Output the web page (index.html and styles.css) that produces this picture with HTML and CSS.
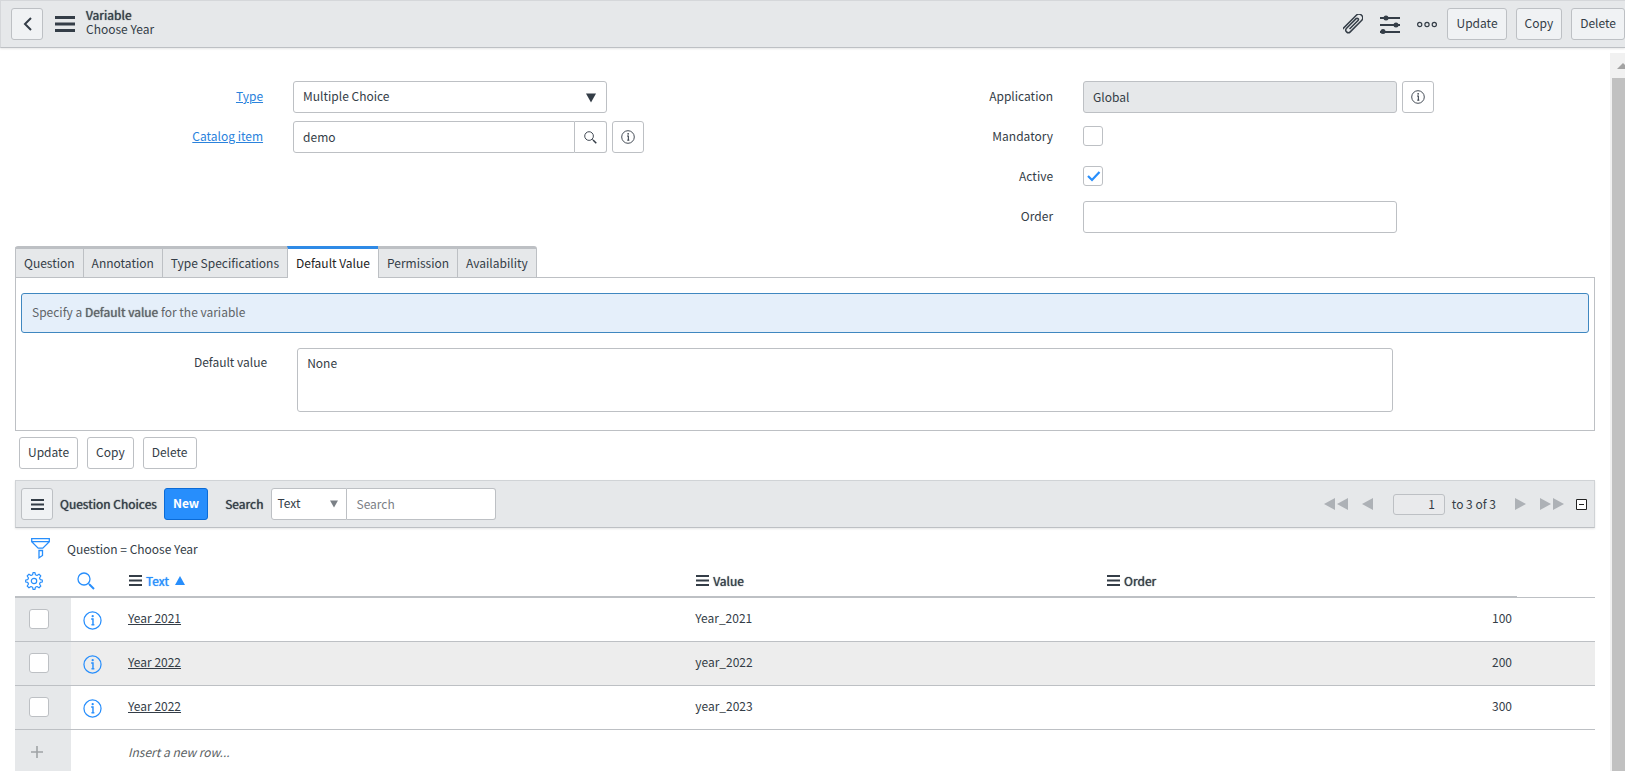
FILE: index.html
```html
<!DOCTYPE html>
<html lang="en">
<head>
<meta charset="utf-8">
<title>Choose Year | Variable</title>
<link rel="stylesheet" href="styles.css">
</head>
<body>
<svg class="defs" aria-hidden="true">
  <symbol id="burger" viewBox="0 0 20 16"><path d="M0 1.5h20M0 8h20M0 14.5h20" stroke="currentColor" stroke-width="3"/></symbol>
  <symbol id="burger-small" viewBox="0 0 13 11"><path d="M0 1h13M0 5.5h13M0 10h13" stroke="currentColor" stroke-width="2"/></symbol>
  <symbol id="info" viewBox="0 0 20 20"><g fill="none" stroke="currentColor" stroke-width="1.3"><circle cx="10" cy="10" r="9"/><path d="M8.6 8.5h1.900v6.500" stroke-width="1.5"/><path d="M8.8 14.5h3.200"/></g><circle cx="10.2" cy="5.5" r="1.2" fill="currentColor"/></symbol>
  <symbol id="glass" viewBox="0 0 18 18"><g fill="none" stroke="currentColor" stroke-width="1.3"><circle cx="7" cy="7" r="6"/><path d="M11.5 11.5l1.5 1.5"/><path d="M12.5 12.5l4.5 4.5" stroke-width="2"/></g></symbol>
  <symbol id="left" viewBox="0 0 11 12"><path d="M11 0v12L0 6z" fill="currentColor"/></symbol>
  <symbol id="right" viewBox="0 0 11 12"><path d="M0 0v12L11 6z" fill="currentColor"/></symbol>
  <symbol id="down" viewBox="0 0 10 10"><path d="M0 0.5h10L5 9.5z" fill="currentColor"/></symbol>
</svg>

<header class="topbar">
  <button class="btn square shaded" aria-label="Back"><svg class="chevron" viewBox="0 0 10 14"><path d="M9 1L3 7l6 6" fill="none" stroke="currentColor" stroke-width="2"/></svg></button>
  <button class="plain" aria-label="Menu"><svg class="burger-lg"><use href="#burger"/></svg></button>
  <h1 class="title"><span class="strong">Variable</span><span>Choose Year</span></h1>
  <div class="tools">
    <button class="plain" aria-label="Attachments"><svg class="tool-icon" viewBox="0 0 20 20"><path transform="rotate(45 10 10)" d="M6.2 21.5V1.5a3.700 3.700 0 0 1 7.400 0V17.5a2.600 2.600 0 0 1-5.200 0V4a1.300 1.300 0 0 1 2.700 0V16" fill="none" stroke="currentColor" stroke-width="1.5"/></svg></button>
    <button class="plain" aria-label="Personalize form"><svg class="tool-icon" viewBox="0 0 20 20"><path d="M0 4h20M0 11h20M0 18h20" stroke="currentColor" stroke-width="1.8"/><g fill="currentColor"><circle cx="6" cy="4" r="2.5"/><circle cx="16" cy="11" r="2.5"/><circle cx="3" cy="17.5" r="2.5"/></g></svg></button>
    <button class="plain" aria-label="More options"><svg class="tool-icon" viewBox="0 0 20 20"><g fill="none" stroke="currentColor" stroke-width="1.2"><circle cx="2.700" cy="10.5" r="2.100"/><circle cx="10" cy="10.5" r="2.100"/><circle cx="17.300" cy="10.5" r="2.100"/></g></svg></button>
  </div>
  <div class="actions">
    <button class="btn shaded">Update</button>
    <button class="btn shaded">Copy</button>
    <button class="btn shaded">Delete</button>
  </div>
</header>

<div class="body">
  <main class="content">
    <form class="form">
      <div class="column">
        <div class="field">
          <label for="type"><a href="#type">Type</a></label>
          <div class="select"><select id="type"><option>Multiple Choice</option></select><svg class="caret"><use href="#down"/></svg></div>
        </div>
        <div class="field">
          <label for="item"><a href="#item">Catalog item</a></label>
          <div class="group"><input class="input" id="item" type="text" value="demo"><button type="button" class="btn square" aria-label="Look up"><svg class="glass-sm"><use href="#glass"/></svg></button></div>
          <button type="button" class="btn square" aria-label="Preview"><svg class="info-sm"><use href="#info"/></svg></button>
        </div>
      </div>
      <div class="column">
        <div class="field">
          <label for="app">Application</label>
          <input class="input readonly" id="app" type="text" value="Global" readonly>
          <button type="button" class="btn square" aria-label="Preview"><svg class="info-sm"><use href="#info"/></svg></button>
        </div>
        <div class="field"><label for="mandatory">Mandatory</label><input class="check" id="mandatory" type="checkbox"></div>
        <div class="field"><label for="active">Active</label><span class="tick"><input class="check" id="active" type="checkbox" checked><svg viewBox="0 0 20 20"><path d="M5 10l4 4 7.5-8" fill="none" stroke="currentColor" stroke-width="2.2"/></svg></span></div>
        <div class="field"><label for="order">Order</label><input class="input" id="order" type="text"></div>
      </div>
    </form>

    <div class="tabs" role="tablist">
      <button class="tab" role="tab">Question</button>
      <button class="tab" role="tab">Annotation</button>
      <button class="tab" role="tab">Type Specifications</button>
      <button class="tab selected" role="tab" aria-selected="true">Default Value</button>
      <button class="tab" role="tab">Permission</button>
      <button class="tab" role="tab">Availability</button>
    </div>
    <section class="panel">
      <p class="message">Specify a <span class="strong">Default value</span> for the variable</p>
      <div class="field-wide">
        <label for="default">Default value</label>
        <textarea id="default">None</textarea>
      </div>
    </section>

    <div class="actions below">
      <button class="btn">Update</button>
      <button class="btn">Copy</button>
      <button class="btn">Delete</button>
    </div>

    <section>
      <div class="listbar">
        <button class="btn square shaded" aria-label="List menu"><svg class="burger-sm"><use href="#burger-small"/></svg></button>
        <h2 class="list-title strong">Question Choices</h2>
        <button class="btn primary">New</button>
        <label class="search-label strong" for="search">Search</label>
        <div class="group search">
          <div class="select"><select aria-label="Search column"><option>Text</option></select><svg class="caret"><use href="#down"/></svg></div>
          <input class="input" id="search" type="text" placeholder="Search">
        </div>
        <nav class="pager">
          <button class="plain pair" aria-label="First page"><svg><use href="#left"/></svg><svg><use href="#left"/></svg></button>
          <button class="plain" aria-label="Previous page"><svg><use href="#left"/></svg></button>
          <span class="range"><input type="text" value="1" aria-label="Row number"><span>to 3 of 3</span></span>
          <button class="plain" aria-label="Next page"><svg><use href="#right"/></svg></button>
          <button class="plain pair" aria-label="Last page"><svg><use href="#right"/></svg><svg><use href="#right"/></svg></button>
          <button class="plain collapse" aria-label="Collapse list"><svg viewBox="0 0 11 11"><path d="M.5.5h10v10H.5zM3 5.5h5" fill="none" stroke="currentColor"/></svg></button>
        </nav>
      </div>
      <div class="filter">
        <button class="plain blue" aria-label="Filter"><svg class="funnel" viewBox="0 0 19 21"><g fill="none" stroke="currentColor" stroke-width="1.3"><path d="M.7.7h17.600v3l-6.500 6.500H7.200L.7 3.700zM.7 3.700h17.600"/><path d="M8 12.500h3.500v5L8 19.800z"/></g></svg></button>
        <span>Question = Choose Year</span>
      </div>
      <table class="list">
        <colgroup><col class="c-check"><col class="c-info"><col class="c-text"><col class="c-value"><col class="c-order"><col class="c-end"></colgroup>
        <thead>
          <tr>
            <th class="gear"><button class="plain blue" aria-label="Personalize list"><svg class="head-icon" viewBox="0 0 18 18"><g fill="none" stroke="currentColor" stroke-width="1.2" stroke-linejoin="round"><path d="M7.600 2.800L8 .7h2l.4 2.100 1.600.7 2-1.300 1.800 1.800-1.300 2 .7 1.600 2.100.4v2l-2.100.4-.7 1.600 1.300 2-1.800 1.800-2-1.300-1.600.7-.4 2.100H8l-.4-2.100-1.600-.7-2 1.300L2.200 14l1.300-2-.7-1.600L.7 10V8l2.100-.4L3.500 6l-1.300-2L4 2.200l2 1.300z"/><circle cx="9" cy="9" r="2.700"/></g></svg></button></th>
            <th class="find"><button class="plain blue" aria-label="Search in list"><svg class="head-icon"><use href="#glass"/></svg></button></th>
            <th><span class="head"><svg class="burger-sm"><use href="#burger-small"/></svg><a class="sorted strong" href="#text">Text</a><svg class="sort" viewBox="0 0 10 9"><path d="M5 0l5 9H0z" fill="currentColor"/></svg></span></th>
            <th><span class="head"><svg class="burger-sm"><use href="#burger-small"/></svg><span class="strong">Value</span></span></th>
            <th><span class="head"><svg class="burger-sm"><use href="#burger-small"/></svg><span class="strong">Order</span></span></th>
            <th class="last"></th>
          </tr>
        </thead>
        <tbody>
          <tr><td class="pick"><input class="check" type="checkbox" aria-label="Select Year 2021"></td><td class="more"><button class="plain blue" aria-label="Preview record"><svg class="info-lg"><use href="#info"/></svg></button></td><td><a href="#r1">Year 2021</a></td><td>Year_2021</td><td class="num">100</td><td></td></tr>
          <tr><td class="pick"><input class="check" type="checkbox" aria-label="Select Year 2022"></td><td class="more"><button class="plain blue" aria-label="Preview record"><svg class="info-lg"><use href="#info"/></svg></button></td><td><a href="#r2">Year 2022</a></td><td>year_2022</td><td class="num">200</td><td></td></tr>
          <tr><td class="pick"><input class="check" type="checkbox" aria-label="Select Year 2022"></td><td class="more"><button class="plain blue" aria-label="Preview record"><svg class="info-lg"><use href="#info"/></svg></button></td><td><a href="#r3">Year 2022</a></td><td>year_2023</td><td class="num">300</td><td></td></tr>
          <tr class="insert"><td class="pick"><button class="plain" aria-label="Insert row"><svg class="plus" viewBox="0 0 12 12"><path d="M6 0v12M0 6h12" stroke="currentColor" stroke-width="1.6"/></svg></button></td><td></td><td colspan="4">Insert a new row...</td></tr>
        </tbody>
      </table>
    </section>
  </main>
  <div class="scrollbar" aria-hidden="true"><svg viewBox="0 0 17 25"><path d="M7 16h12l-6-6z" fill="#a3a3a3"/></svg><div class="thumb"></div></div>
</div>
</body>
</html>
```
FILE: styles.css
```css
:root {
  --ink: #343d47;
  --line: #bdc0c4;
  --bar: #e6e8ea;
  --blue: #278efc;
}
* { box-sizing: border-box; }
body {
  margin: 0;
  height: 100vh;
  display: flex;
  flex-direction: column;
  overflow: hidden;
  background: #fff;
  color: var(--ink);
  font: 12px/18px "Noto Sans CJK SC", "Noto Sans", sans-serif;
}
button, input, select, textarea { font: inherit; color: inherit; margin: 0; }
svg { display: block; flex: none; }
.defs { display: none; }
.strong { font-weight: 400; text-shadow: 0 0 1px currentColor; }
.plain { border: 0; padding: 0; background: none; display: flex; }
.blue { color: var(--blue); }

.btn {
  height: 32px;
  padding: 0 8px 2px;
  border: 1px solid var(--line);
  border-radius: 3px;
  background: #fff;
  display: flex;
  align-items: center;
  justify-content: center;
  flex: none;
}
.shaded { background: #f0f2f4; }
.square { width: 32px; padding: 0; }
.primary { background: var(--blue); border-color: #0b6bd6; color: #fff; font-weight: 700; }

.topbar {
  display: flex;
  align-items: center;
  flex: none;
  height: 48px;
  padding-left: 10px;
  border: 1px solid #d5d7da;
  border-right: 0;
  border-bottom-color: var(--line);
  background: var(--bar);
  box-shadow: 0 1px 2px rgba(0, 0, 0, .1);
}
.chevron { width: 10px; height: 14px; }
.burger-lg { width: 20px; height: 16px; margin: 0 11px 0 12px; }
.title { margin: 0; padding-bottom: 5px; font-size: 12px; font-weight: 400; line-height: 14px; display: flex; flex-direction: column; }
.tools { display: flex; gap: 17px; margin-left: auto; }
.tool-icon { width: 20px; height: 20px; }
.actions { display: flex; gap: 9px; }
.topbar .actions { margin-left: 10px; }

.body { flex: 1; min-height: 0; display: flex; }
.content { flex: 1; min-width: 0; padding: 33px 15px 0; }

.form { display: grid; grid-template-columns: 1fr 1fr; }
.column { display: flex; flex-direction: column; gap: 8px; }
.field { display: flex; align-items: center; min-height: 32px; gap: 5px; }
.field > label { width: 31.4%; margin-right: 25px; padding-bottom: 2px; text-align: right; }
.form a { color: #2a82dc; text-decoration: underline; }
.field > .select, .field > .group, .field > .input { flex: none; width: 39.8%; }
.input, .select select, textarea {
  border: 1px solid var(--line);
  border-radius: 3px;
  background: #fff;
  padding: 0 9px;
}
.input { height: 32px; min-width: 0; padding-bottom: 2px; }
.input.readonly { background: var(--bar); }
.group { display: flex; }
.group > .input { flex: 1; border-radius: 3px 0 0 3px; }
.group > .btn { border-left: 0; border-radius: 0 3px 3px 0; }
.select { position: relative; }
.select select { appearance: none; width: 100%; height: 32px; padding-bottom: 2px; }
.caret { position: absolute; right: 11px; top: 12px; width: 10px; height: 10px; pointer-events: none; }
.glass-sm { width: 13px; height: 13px; }
.info-sm { width: 14px; height: 14px; }
.check {
  appearance: none;
  display: block;
  width: 20px;
  height: 20px;
  border: 1px solid var(--line);
  border-radius: 3px;
  background: #fff;
}
.field .check { margin-bottom: 2px; }
.tick { position: relative; color: var(--blue); }
.tick svg { position: absolute; top: 0; left: 0; width: 20px; height: 20px; pointer-events: none; }

.tabs { display: flex; margin-top: 13px; }
.tab {
  height: 31px;
  padding: 0 8px;
  border: 1px solid var(--line);
  border-width: 3px 0 0 1px;
  background: var(--bar);
}
.tab:first-child { border-top-left-radius: 3px; }
.tab:last-child { border-right-width: 1px; border-top-right-radius: 3px; }
.tab.selected { height: 32px; margin-bottom: -1px; padding-bottom: 1px; background: #fff; border-top-color: #2f8ae6; color: #222; z-index: 1; }
.panel { border: 1px solid var(--line); padding: 15px 5px 18px; }
.message {
  margin: 0 0 15px;
  padding: 9px 10px 11px;
  border: 1px solid #3f87c0;
  border-radius: 3px;
  background: #e5effa;
  color: #5f6468;
}
.field-wide { display: flex; gap: 30px; }
.field-wide label { width: 15.7%; padding-top: 5px; text-align: right; }
.field-wide textarea { width: 69.9%; height: 64px; padding: 5px 9px; resize: none; display: block; }
.below { padding: 6px 4px 11px; }

.listbar {
  display: flex;
  align-items: center;
  height: 48px;
  padding: 0 7px 0 5px;
  border: 1px solid #d0d3d6;
  border-bottom-color: var(--line);
  background: var(--bar);
  box-shadow: 0 1px 2px rgba(0, 0, 0, .1);
}
.burger-sm { width: 13px; height: 11px; }
.list-title { margin: 0 7px; font-size: 12px; }
.search-label { margin: 0 8px 0 17px; }
.search .select { width: 76px; }
.search select { border-radius: 3px 0 0 3px; padding: 0 5px 2px; }
.search .caret { right: 9px; color: #7b8086; width: 8px; height: 8px; }
.search > .input { width: 149px; flex: none; border-left: 0; border-radius: 0 3px 3px 0; }
.input::placeholder { color: #7b8086; opacity: 1; }
.pager { display: flex; align-items: center; gap: 14px; margin-left: auto; color: #adb1b6; }
.pager svg { width: 11px; height: 12px; }
.pair { gap: 2px; }
.range { display: flex; align-items: center; gap: 7px; margin: 0 5px 0 6px; color: var(--ink); }
.range input { width: 52px; height: 21px; padding: 0 9px 1px; text-align: right; border: 1px solid var(--line); border-radius: 3px; background: #e9eaec; }
.collapse { margin-left: -2px; color: #222; background: #fff; }
.pager .collapse svg { height: 11px; }

.filter { display: flex; align-items: center; gap: 17px; height: 41px; padding-left: 16px; }
.funnel { width: 19px; height: 21px; }

.list { width: 100%; table-layout: fixed; border-collapse: separate; border-spacing: 0; }
.c-check { width: 56px; }
.c-info { width: 52px; }
.c-text { width: 35.9%; }
.c-value { width: 26%; }
.c-order { width: auto; }
.c-end { width: 78px; }
.list th, .list td { text-align: left; font-weight: 400; padding: 0 5px; }
.list th { height: 29px; padding-bottom: 4px; border-bottom: 2px solid var(--line); }
.list th.last { border-bottom-width: 1px; }
.list th.gear { padding-left: 10px; }
.list th.find { padding-left: 6px; }
.head-icon { width: 18px; height: 18px; }
.head { display: flex; align-items: center; gap: 4px; padding-left: 1px; }
.sorted { color: var(--blue); text-decoration: none; }
.sort { width: 10px; height: 9px; margin-left: 2px; color: var(--blue); }
.list td { height: 44px; padding-bottom: 3px; border-bottom: 1px solid var(--line); }
.list td a { color: inherit; text-decoration: underline; }
.list tbody tr:nth-child(even) { background: #ededed; }
.list td.pick { background: var(--bar); padding: 0 0 1px 14px; }
.list td.more { padding: 2px 0 0 12px; }
.list td.num { text-align: right; }
.list tbody tr.insert { background: #fff; font-style: italic; color: #5b5f63; }
.list .insert td { padding-bottom: 0; }
.insert .plus { width: 12px; height: 12px; margin-left: 2px; color: #a0a3a6; }
.info-lg { width: 19px; height: 19px; }

.scrollbar { flex: none; width: 15px; margin-top: 5px; background: #f1f1f1; display: flex; flex-direction: column; overflow: hidden; }
.scrollbar svg { width: 17px; height: 25px; }
.thumb { flex: 1; margin-left: 2px; background: #c1c1c1; }
```
